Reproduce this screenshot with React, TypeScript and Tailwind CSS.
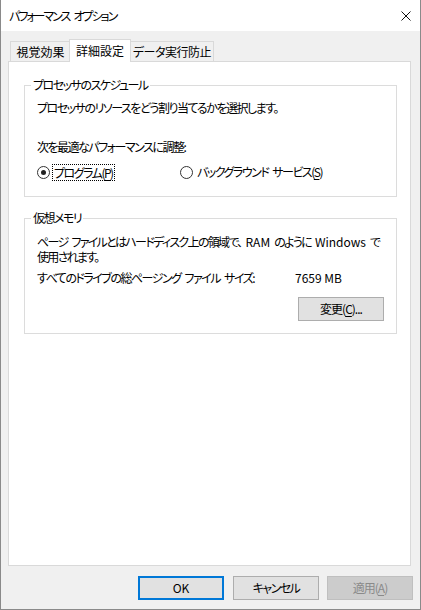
import React from 'react';

const Mn: React.FC<{ children: React.ReactNode }> = ({ children }) => (
  <span className="underline underline-offset-[2px]">{children}</span>
);

// Latin runs keep normal spacing; the Japanese text is tightened to get near Yu Gothic UI widths
const Lat: React.FC<{ children: React.ReactNode }> = ({ children }) => (
  <span className="tracking-normal">{children}</span>
);

// a word space that survives the negative tracking
const Sp = () => <span className="inline-block w-[4px]"> </span>;

const Radio: React.FC<{ checked?: boolean }> = ({ checked }) => (
  <span className="w-[13px] h-[13px] rounded-full border border-[#333333] bg-white flex items-center justify-center shrink-0">
    {checked && <span className="w-[5px] h-[5px] rounded-full bg-[#222222]" />}
  </span>
);

export default function App() {
  return (
    <div className="w-[421px] h-[610px] flex flex-col border-x border-b border-[#8a8a8a] bg-[#f0f0f0] text-[12px] text-black tracking-[-1.5px] font-['Noto_Sans_CJK_JP',sans-serif] [font-feature-settings:'palt']">
      {/* title bar */}
      <div className="h-[31px] shrink-0 bg-white flex items-center justify-between pl-[8px] pr-[9px]">
        <span className="leading-[16px] tracking-[-2px] whitespace-nowrap">
          パフォーマンス<Sp />オプション
        </span>
        <svg width="10" height="10" viewBox="0 0 10 10">
          <path d="M0.5 0.5 L9.5 9.5 M9.5 0.5 L0.5 9.5" stroke="#111" strokeWidth="1" fill="none" />
        </svg>
      </div>

      <div className="flex-1 flex flex-col pt-[8px] pl-[7px]">
        {/* tabs */}
        <div className="flex items-end h-[22px] pl-[2px]">
          <div className="w-[61px] h-[20px] border-x border-t border-[#d9d9d9] flex items-center justify-center leading-[16px] tracking-normal">
            視覚効果
          </div>
          <div className="relative z-10 w-[62px] h-[23px] -mb-px -ml-[2px] bg-white border-x border-t border-[#d9d9d9] flex items-center justify-center leading-[16px] pb-[1px] tracking-normal">
            詳細設定
          </div>
          <div className="w-[84px] h-[20px] -ml-px border-x border-t border-[#d9d9d9] flex items-center justify-center leading-[16px] tracking-[-0.5px]">
            データ実行防止
          </div>
        </div>

        {/* panel */}
        <div className="w-[403px] h-[505px] bg-white border border-[#d9d9d9] pl-[15px] pt-[15px]">
          <fieldset className="w-[373px] border border-[#dcdcdc] pl-[6px]">
            <legend className="px-[2px] leading-[16px]">プロセッサのスケジュール</legend>
            <div className="pl-[6px] pt-[7px] pb-[16px]">
              <p className="leading-[16px]">プロセッサのリソースをどう割り当てるかを選択します。</p>
              <p className="leading-[16px] mt-[23px]">次を最適なパフォーマンスに調整:</p>
              <div className="flex items-center h-[16px] mt-[9px]">
                <div className="w-[143px] flex items-center">
                  <Radio checked />
                  <span className="ml-[2px] border border-dotted border-black leading-[15px] px-px">
                    プログラム(<Mn>P</Mn>)
                  </span>
                </div>
                <Radio />
                <span className="ml-[4px] leading-[16px] whitespace-nowrap">
                  バックグラウンド<Sp />サービス(<Mn>S</Mn>)
                </span>
              </div>
            </div>
          </fieldset>

          <fieldset className="w-[373px] mt-[13px] border border-[#dcdcdc] pl-[6px]">
            <legend className="px-[2px] leading-[16px]">仮想メモリ</legend>
            <div className="pl-[6px] pt-[8px] pb-[12px]">
              <p className="leading-[15px] whitespace-nowrap tracking-[-1.7px]">
                ページ<Sp />ファイルとはハードディスク上の領域で、<Sp /><Lat>RAM</Lat><Sp />のように<Sp /><Lat>Windows</Lat><Sp />で
                <br />
                使用されます。
              </p>
              <div className="flex leading-[16px] mt-[6px] whitespace-nowrap">
                <span className="w-[258px]">
                  すべてのドライブの総ページング<Sp />ファイル<Sp />サイズ:
                </span>
                <Lat>7659 MB</Lat>
              </div>
              <div className="flex justify-end pr-[12px] mt-[11px]">
                <button className="w-[86px] h-[24px] bg-[#e1e1e1] border border-[#adadad] flex items-center justify-center leading-[16px] tracking-[-1px]">
                  変更(<Mn>C</Mn>)...
                </button>
              </div>
            </div>
          </fieldset>
        </div>

        {/* buttons */}
        <div className="flex justify-end pr-[7px] mt-[10px]">
          <button className="w-[86px] h-[24px] bg-[#e1e1e1] border-2 border-[#0078d7] flex items-center justify-center leading-[16px] tracking-normal">
            OK
          </button>
          <button className="w-[86px] h-[24px] ml-[9px] bg-[#e1e1e1] border border-[#adadad] flex items-center justify-center leading-[16px]">
            キャンセル
          </button>
          <button className="w-[86px] h-[24px] ml-[8px] bg-[#cccccc] border border-[#bfbfbf] text-[#8a8a8a] flex items-center justify-center leading-[16px] tracking-[-1px]">
            適用(<Mn>A</Mn>)
          </button>
        </div>
      </div>
    </div>
  );
}
